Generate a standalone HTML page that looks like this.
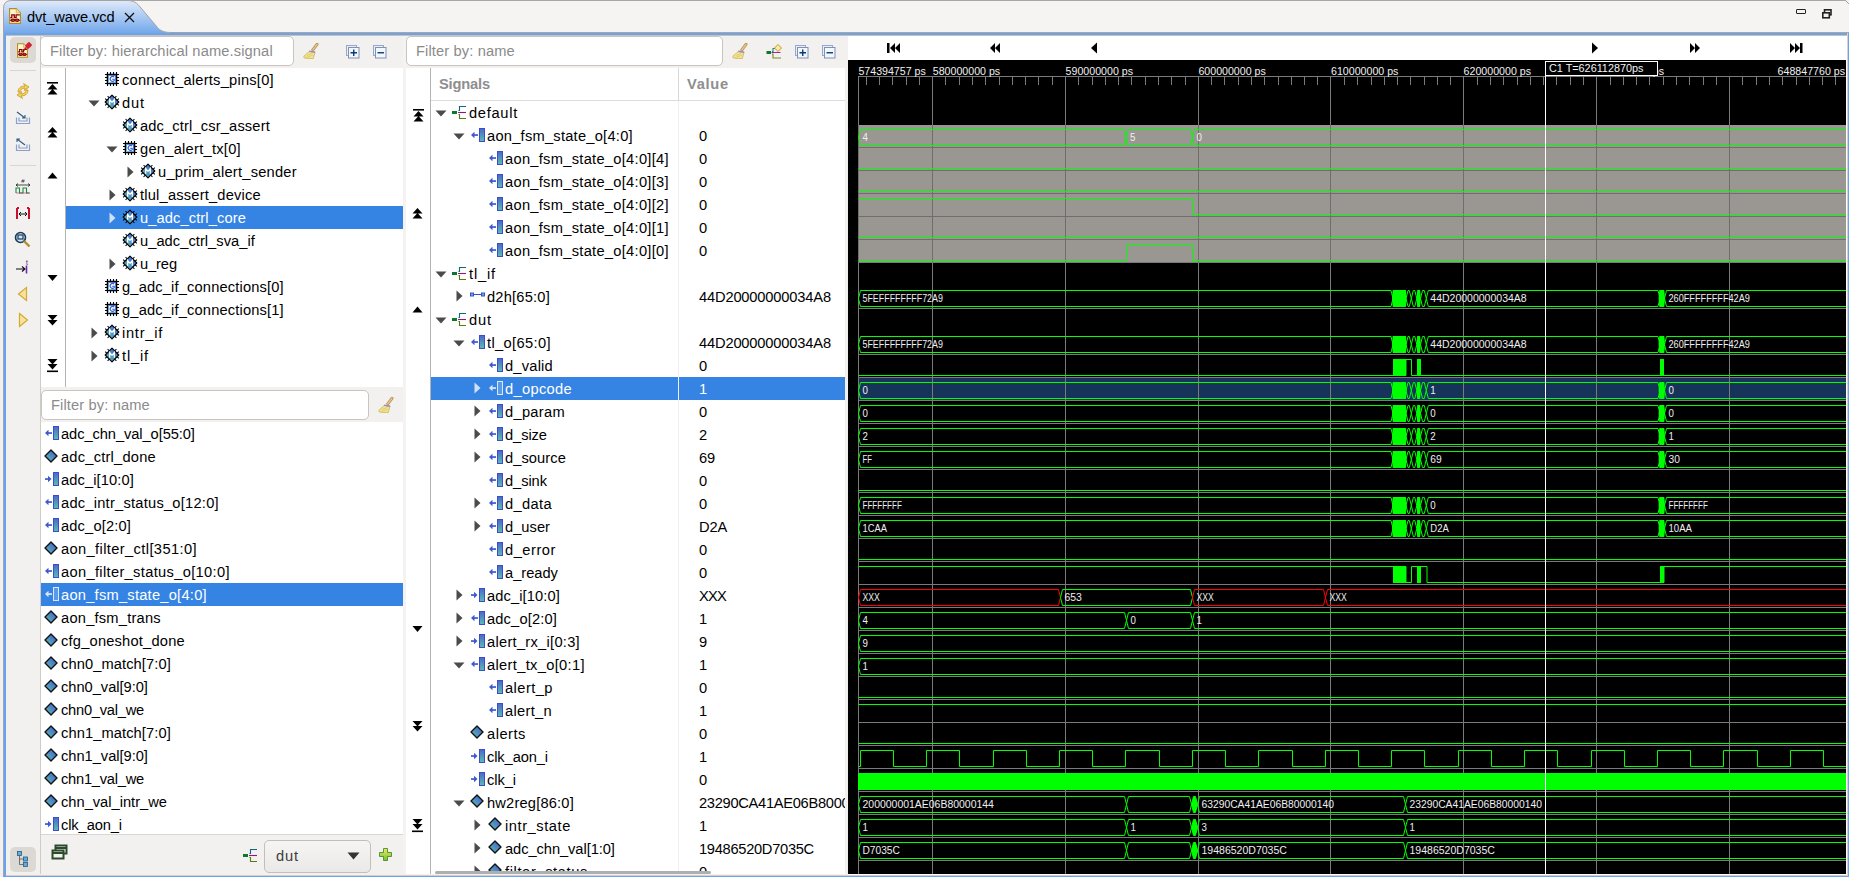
<!DOCTYPE html><html><head><meta charset="utf-8"><style>
*{box-sizing:border-box}
body{margin:0;width:1849px;height:877px;overflow:hidden;background:#f2f1f0;position:relative;font-family:"Liberation Sans",sans-serif;}
.a{position:absolute}
.t{position:absolute;white-space:pre;font-size:14.67px;height:23px}
svg{position:absolute;overflow:visible}
</style></head><body>
<svg width="0" height="0" style="position:absolute">
<defs>
<linearGradient id="tabg" x1="0" y1="0" x2="0" y2="1"><stop offset="0" stop-color="#dfeafa"/><stop offset="1" stop-color="#6aa2ea"/></linearGradient>
<linearGradient id="barg" x1="0" y1="0" x2="0" y2="1"><stop offset="0" stop-color="#4a68c8"/><stop offset="1" stop-color="#5cbcb4"/></linearGradient>
<linearGradient id="diag" x1="1" y1="0" x2="0" y2="1"><stop offset="0.1" stop-color="#4060d0"/><stop offset="0.9" stop-color="#5cbab2"/></linearGradient>
<linearGradient id="gbord" x1="1" y1="0" x2="0" y2="1"><stop offset="0" stop-color="#3a62d8"/><stop offset="1" stop-color="#6ad0e0"/></linearGradient>
<symbol id="tdown" viewBox="0 0 12 12"><path d="M0.5 3.5h11l-5.5 6z" fill="#4b4b4b"/></symbol>
<symbol id="tright" viewBox="0 0 12 12"><path d="M3.5 0.5v11l6-5.5z" fill="#4b4b4b"/></symbol>
<symbol id="trightw" viewBox="0 0 12 12"><path d="M3.5 0.5v11l6-5.5z" fill="#cfe0f7"/></symbol>
<symbol id="icG" viewBox="0 0 16 16"><path d="M3.5 1v14M6.5 1v14M9.5 1v14M12.5 1v14M1 3.5h14M1 6.5h14M1 9.5h14M1 12.5h14" stroke="#000" stroke-width="1.1"/><rect x="2.75" y="2.75" width="10.5" height="10.5" fill="#000"/><rect x="4.45" y="4.45" width="7.1" height="7.1" fill="#fff" stroke="url(#gbord)" stroke-width="0.9"/><path d="M10.2 6.2A2.3 2.5 0 1 0 10.2 9.6V8.2H8.2" stroke="#3a58cc" stroke-width="1.1" fill="none"/></symbol>
<symbol id="icM" viewBox="0 0 16 16"><path d="M3 6.4L1.2 4.6M5.4 4L3.6 2.2M10.6 4L12.4 2.2M13 6.4L14.8 4.6M13 9.6L14.8 11.4M10.6 12L12.4 13.8M5.4 12L3.6 13.8M3 9.6L1.2 11.4" stroke="#000" stroke-width="1.05"/><path d="M8 1.2l6.8 6.8l-6.8 6.8l-6.8-6.8z" fill="url(#diag)" stroke="#000" stroke-width="1.15" stroke-linejoin="round"/><path d="M5.7 10.8V5.5L8 8.3L10.3 5.5V10.8" stroke="#fff" stroke-width="1.3" fill="none"/></symbol>
<symbol id="icOut" viewBox="0 0 18 18"><path d="M2 9L5.5 5.8V12.2z" fill="#3d5acc"/><rect x="5" y="8.2" width="4" height="1.7" fill="#3d5acc"/><rect x="10.5" y="2.5" width="5" height="13" fill="url(#barg)" stroke="#3b4ccc" stroke-width="1"/></symbol>
<symbol id="icOutW" viewBox="0 0 18 18"><path d="M2 9L5.5 5.8V12.2z" fill="#dbe8fb"/><rect x="5" y="8.2" width="4" height="1.7" fill="#dbe8fb"/><rect x="10.5" y="2.5" width="5" height="13" fill="#5c9ae8" stroke="#dbe8fb" stroke-width="1"/></symbol>
<symbol id="icIn" viewBox="0 0 18 18"><path d="M8.5 9L5 5.8V12.2z" fill="#3d5acc"/><rect x="2" y="8.2" width="4" height="1.7" fill="#3d5acc"/><rect x="10.5" y="2.5" width="5" height="13" fill="url(#barg)" stroke="#3b4ccc" stroke-width="1"/></symbol>
<symbol id="icVar" viewBox="0 0 14 14"><path d="M7 1l6 6l-6 6l-6-6z" fill="url(#diag)" stroke="#111" stroke-width="1.4" stroke-linejoin="round"/></symbol>
<symbol id="icGrp" viewBox="0 0 18 18"><rect x="1" y="8" width="5" height="3" fill="#0a7a2a"/><path d="M15 3.5H8.5V7.5H7.5" stroke="#0a6a7a" stroke-width="1.1" fill="none"/><path d="M7 9.5H15" stroke="#8a1a80" stroke-width="1.1"/><path d="M7.5 11.5H8.5V15.5H15" stroke="#5a7a10" stroke-width="1.1" fill="none"/></symbol>
<symbol id="icStruct" viewBox="0 0 18 18"><rect x="1.5" y="6" width="3" height="3" fill="#5cb8c0" stroke="#3a4ccc" stroke-width="1"/><rect x="12.5" y="6" width="3" height="3" fill="#5cb8c0" stroke="#3a4ccc" stroke-width="1"/><path d="M4.5 7.5h8" stroke="#3a4ccc" stroke-width="1"/></symbol>
<symbol id="icBroom" viewBox="0 0 16 16"><path d="M14 1.3L9.8 6.8" stroke="#b89050" stroke-width="3" stroke-linecap="round"/><path d="M14 1.3L9.8 6.8" stroke="#e8c890" stroke-width="1.4" stroke-linecap="round"/><path d="M6.5 8.3L12 9.3L10.3 15.6Q5 16 1 14.8L0.8 13.2z" fill="#f0e38e" stroke="#cdb55a" stroke-width="0.8"/><path d="M6.2 8.2L12.2 9.2" stroke="#9c8ad0" stroke-width="1.6"/><path d="M4 12.5L9 10.5M3.5 14.5L10 12" stroke="#d8c060" stroke-width="0.6"/></symbol>
<symbol id="icPlusBox" viewBox="0 0 14 14"><rect x="0.5" y="0.5" width="10" height="10" fill="#e6eef8" stroke="#9aa8c8"/><rect x="2.5" y="2.5" width="10.5" height="10.5" fill="#f2f7fd" stroke="#8090b8"/><path d="M4.5 7.75h6.5M7.75 4.5v6.5" stroke="#0a3a78" stroke-width="1.4"/></symbol>
<symbol id="icMinusBox" viewBox="0 0 14 14"><rect x="0.5" y="0.5" width="10" height="10" fill="#e6eef8" stroke="#9aa8c8"/><rect x="2.5" y="2.5" width="10.5" height="10.5" fill="#f2f7fd" stroke="#8090b8"/><path d="M4.5 7.75h6.5" stroke="#0a3a78" stroke-width="1.4"/></symbol>
<symbol id="icTop" viewBox="0 0 12 14"><rect x="0" y="0" width="11" height="1.6" fill="#000"/><path d="M5.5 2l5 5.5h-10z M5.5 7l5 5.5h-10z" fill="#000"/></symbol>
<symbol id="icUp2" viewBox="0 0 12 14"><path d="M5.5 0l5 5.5h-10z M5.5 5l5 5.5h-10z" fill="#000"/></symbol>
<symbol id="icUp" viewBox="0 0 12 8"><path d="M5.5 0.5l5 6h-10z" fill="#000"/></symbol>
<symbol id="icDown" viewBox="0 0 12 8"><path d="M5.5 7l5-6h-10z" fill="#000"/></symbol>
<symbol id="icDown2" viewBox="0 0 12 14"><path d="M5.5 5.5l5-5.5h-10z M5.5 10.5l5-5.5h-10z" fill="#000"/></symbol>
<symbol id="icBot" viewBox="0 0 12 14"><path d="M5.5 5.5l5-5.5h-10z M5.5 10.5l5-5.5h-10z" fill="#000"/><rect x="0" y="11.5" width="11" height="1.6" fill="#000"/></symbol>
<symbol id="icVcd" viewBox="0 0 12 16"><path d="M0.6 0.6H7.2L11.4 4.8V15.4H0.6z" fill="#fff4cc" stroke="#b48a1c" stroke-width="1.1"/><path d="M7.2 0.6V4.8H11.4" fill="#f0d890" stroke="#c8a040" stroke-width="0.6"/><path d="M1.2 9.6H2.8V6.9H5.3V9.6H7.1V6.9H10.8" stroke="#8b0000" stroke-width="1.3" fill="none"/><path d="M1 12.3H11" stroke="#8b0000" stroke-width="0.9"/><ellipse cx="3.9" cy="12.3" rx="1.9" ry="1.2" fill="none" stroke="#8b0000" stroke-width="1.1"/><ellipse cx="8.1" cy="12.3" rx="1.9" ry="1.2" fill="none" stroke="#8b0000" stroke-width="1.1"/></symbol>
</defs></svg>
<div class="a" style="left:0;top:0;width:1849px;height:33px;background:#f5f4f2"></div>
<div class="a" style="left:120px;top:0;width:1725px;height:1px;background:#a9a7a4"></div>
<svg style="left:0;top:0" width="200" height="36"><path d="M3.5 36V8.5Q3.5 0.5 11.5 0.5H127C134 0.5 137 3 141 8L157.5 27.5C160 30.5 164 32.5 171 32.5H200V36z" fill="url(#tabg)"/><path d="M3.5 36V8.5Q3.5 0.5 11.5 0.5H127C134 0.5 137 3 141 8L157.5 27.5C160 30.5 164 32.5 171 32.5H200" fill="none" stroke="#a3a3a3" stroke-width="1"/></svg>
<div class="a" style="left:1845px;top:0;width:4px;height:4px;background:linear-gradient(45deg,#f2f1f0 50%,#a9a7a4 50%,#a9a7a4 60%,#f2f1f0 60%)"></div>
<svg style="left:9px;top:8px" width="12" height="16"><use href="#icVcd"/></svg>
<div class="t" style="left:27px;top:6px;line-height:23px;color:#000;letter-spacing:-0.115px;">dvt_wave.vcd</div>
<svg style="left:124px;top:12px" width="11" height="11"><path d="M1 1l9 9M10 1l-9 9" stroke="#111" stroke-width="1.3"/></svg>
<div class="a" style="left:1796px;top:9px;width:10px;height:5px;border:1.5px solid #222;border-radius:1px"></div>
<svg style="left:1822px;top:9px" width="11" height="10"><rect x="2.5" y="0.8" width="6.5" height="5" fill="none" stroke="#222" stroke-width="1.6"/><rect x="0.8" y="3.8" width="6.5" height="5" fill="#f2f1f0" stroke="#222" stroke-width="1.6"/></svg>
<div class="a" style="left:200px;top:32px;width:1649px;height:1px;background:#a9a7a4"></div>
<div class="a" style="left:3px;top:33px;width:1846px;height:2px;background:#6ca4ec"></div>
<div class="a" style="left:3px;top:35px;width:1846px;height:1px;background:#c9c0b8"></div>
<div class="a" style="left:3px;top:33px;width:1px;height:844px;background:#9aa8b8"></div>
<div class="a" style="left:4px;top:33px;width:2px;height:844px;background:#6ca4ec"></div>
<div class="a" style="left:1847px;top:33px;width:1px;height:844px;background:#d8d2cc"></div><div class="a" style="left:1848px;top:33px;width:1px;height:844px;background:#6ca4ec"></div>
<div class="a" style="left:3px;top:876px;width:1846px;height:1px;background:#6ca4ec"></div>
<div class="a" style="left:6px;top:875px;width:1841px;height:1px;background:#d8d0c8"></div>
<div class="a" style="left:6px;top:36px;width:34px;height:838px;background:#f2f1f0"></div>
<div class="a" style="left:10px;top:37px;width:26px;height:26px;background:#dcd9d5;border-radius:5px"></div>
<svg style="left:15px;top:41px" width="18" height="18"><use href="#icVcd" x="2" y="2" width="11" height="15"/><path d="M8.5 9.5L11.5 6.5" stroke="#b01020" stroke-width="1.6"/><path d="M10.5 4.2L13.8 7.5M12 2.5L15.5 6M11.5 4.5L14 2L16 4L13.5 6.5z" stroke="#d42030" stroke-width="1.8" fill="#e83040"/></svg>
<div class="a" style="left:10px;top:70px;width:26px;height:1px;background:#d9d6d2"></div>
<div class="a" style="left:10px;top:165px;width:26px;height:1px;background:#d9d6d2"></div>
<svg style="left:15px;top:83px" width="16" height="16"><path d="M3 9c0-4 3-6 7-6l-1.5-2.5L14 4l-4.5 3.5L10 5c-3 0-5 2-5 4z" fill="#f3cf5a" stroke="#c89a20" stroke-width="0.8"/><path d="M13 7c0 4-3 6-7 6l1.5 2.5L2 12l4.5-3.5L6 11c3 0 5-2 5-4z" fill="#f3cf5a" stroke="#c89a20" stroke-width="0.8"/></svg>
<svg style="left:15px;top:111px" width="16" height="14"><path d="M1.5 6.5v6h13v-6M4 6.5v3.5h8v-3.5" fill="none" stroke="#8aa0c8" stroke-width="1.2"/><path d="M2 1l8 6M7 7h3v-3" stroke="#2a5a8a" stroke-width="1.1" fill="none"/></svg>
<svg style="left:15px;top:138px" width="16" height="14"><path d="M1.5 6.5v6h13v-6M4 6.5v3.5h8v-3.5" fill="none" stroke="#8aa0c8" stroke-width="1.2"/><path d="M10 7L2 1M2 4V1h3" stroke="#2a5a8a" stroke-width="1.1" fill="none"/></svg>
<svg style="left:15px;top:177px" width="16" height="17"><text x="8" y="6" font-size="6" text-anchor="middle" font-family="Liberation Sans" fill="#222">#</text><path d="M1 8h14M1 8l2-1.5M1 8l2 1.5M15 8l-2-1.5M15 8l-2 1.5" stroke="#222" stroke-width="0.8"/><path d="M1 16v-5h3.5v5h3.5v-5h3.5v5h3" stroke="#1a8a3a" stroke-width="1.1" fill="none"/><path d="M1 16h14" stroke="#b03070" stroke-width="0.6"/></svg>
<svg style="left:15px;top:206px" width="16" height="15"><path d="M2 2v11M14 2v11" stroke="#c8102e" stroke-width="2"/><path d="M2 2h2M14 2h-2" stroke="#c8102e" stroke-width="2"/><path d="M4 8h8M4 8l2-2M4 8l2 2M12 8l-2-2M12 8l-2 2" stroke="#111" stroke-width="1"/></svg>
<svg style="left:14px;top:231px" width="17" height="17"><circle cx="6.5" cy="6.5" r="5" fill="#cfe4f4" stroke="#1a3a5a" stroke-width="1.6"/><rect x="4" y="4" width="5" height="4" fill="none" stroke="#1a3a5a" stroke-width="1.2"/><path d="M10 10l5.5 5.5" stroke="#b0902a" stroke-width="2.4"/></svg>
<svg style="left:15px;top:259px" width="16" height="16"><text x="11" y="6" font-size="6.5" font-family="Liberation Sans" fill="#222">t</text><path d="M1 10h9M7 7.5l3 2.5l-3 2.5" stroke="#111" stroke-width="1.1" fill="none"/><path d="M11.5 6.5v8" stroke="#6a2ab8" stroke-width="1.6"/></svg>
<svg style="left:16px;top:286px" width="14" height="16"><path d="M10.5 1.5v13l-8-6.5z" fill="#f7e3a0" stroke="#d8a830" stroke-width="1.2"/></svg>
<svg style="left:16px;top:312px" width="14" height="16"><path d="M3.5 1.5v13l8-6.5z" fill="#f7e3a0" stroke="#d8a830" stroke-width="1.2"/></svg>
<div class="a" style="left:10px;top:847px;width:26px;height:25px;background:#dcd9d5;border-radius:5px"></div>
<svg style="left:17px;top:851px" width="12" height="16"><rect x="0.5" y="0.5" width="4" height="4" fill="#5ab0d8" stroke="#2a5a8a" stroke-width="0.8"/><rect x="6.5" y="6" width="4" height="4" fill="#5ab0d8" stroke="#2a5a8a" stroke-width="0.8"/><rect x="6.5" y="11.5" width="4" height="4" fill="#5ab0d8" stroke="#2a5a8a" stroke-width="0.8"/><path d="M2.5 4.5v9h4M2.5 8h4" stroke="#555" stroke-width="0.8" fill="none"/></svg>
<div class="a" style="left:40px;top:36px;width:1px;height:838px;background:#cfcbc6"></div>
<div class="a" style="left:40px;top:36px;width:254px;height:30px;background:#fff;border:1px solid #c9c4bf;border-radius:5px"></div><div class="t" style="left:50px;top:40px;line-height:23px;color:#8b8b8b;letter-spacing:0.128px;">Filter by: hierarchical name.signal</div>
<svg style="left:303px;top:43px" width="16" height="16"><use href="#icBroom" width="16" height="16"/></svg>
<svg style="left:346px;top:45px" width="14" height="14"><use href="#icPlusBox" width="14" height="14"/></svg>
<svg style="left:373px;top:45px" width="14" height="14"><use href="#icMinusBox" width="14" height="14"/></svg>
<div class="a" style="left:41px;top:68px;width:362px;height:319px;background:#fff"></div>
<div class="a" style="left:65px;top:68px;width:1px;height:319px;background:#b4b4b4"></div>
<svg style="left:47px;top:82px" width="12" height="14"><use href="#icTop" width="12" height="14"/></svg>
<svg style="left:47px;top:127px" width="12" height="14"><use href="#icUp2" width="12" height="14"/></svg>
<svg style="left:47px;top:172px" width="12" height="8"><use href="#icUp" width="12" height="8"/></svg>
<svg style="left:47px;top:274px" width="12" height="8"><use href="#icDown" width="12" height="8"/></svg>
<svg style="left:47px;top:315px" width="12" height="14"><use href="#icDown2" width="12" height="14"/></svg>
<svg style="left:47px;top:359px" width="12" height="14"><use href="#icBot" width="12" height="14"/></svg>
<svg style="left:104px;top:71px" width="16" height="16"><use href="#icG" width="16" height="16"/></svg>
<div class="t" style="left:122px;top:69px;line-height:23px;color:#000;letter-spacing:0.237px;">connect_alerts_pins[0]</div>
<svg style="left:88px;top:97px" width="12" height="12"><use href="#tdown" width="12" height="12"/></svg>
<svg style="left:104px;top:94px" width="16" height="16"><use href="#icM" width="16" height="16"/></svg>
<div class="t" style="left:122px;top:92px;line-height:23px;color:#000;letter-spacing:0.869px;">dut</div>
<svg style="left:122px;top:117px" width="16" height="16"><use href="#icM" width="16" height="16"/></svg>
<div class="t" style="left:140px;top:115px;line-height:23px;color:#000;letter-spacing:0.148px;">adc_ctrl_csr_assert</div>
<svg style="left:106px;top:143px" width="12" height="12"><use href="#tdown" width="12" height="12"/></svg>
<svg style="left:122px;top:140px" width="16" height="16"><use href="#icG" width="16" height="16"/></svg>
<div class="t" style="left:140px;top:138px;line-height:23px;color:#000;letter-spacing:0.263px;">gen_alert_tx[0]</div>
<svg style="left:124px;top:166px" width="12" height="12"><use href="#tright" width="12" height="12"/></svg>
<svg style="left:140px;top:163px" width="16" height="16"><use href="#icM" width="16" height="16"/></svg>
<div class="t" style="left:158px;top:161px;line-height:23px;color:#000;letter-spacing:0.234px;">u_prim_alert_sender</div>
<svg style="left:106px;top:189px" width="12" height="12"><use href="#tright" width="12" height="12"/></svg>
<svg style="left:122px;top:186px" width="16" height="16"><use href="#icM" width="16" height="16"/></svg>
<div class="t" style="left:140px;top:184px;line-height:23px;color:#000;letter-spacing:0.199px;">tlul_assert_device</div>
<div class="a" style="left:66px;top:206px;width:337px;height:23px;background:#3584e4"></div>
<svg style="left:106px;top:212px" width="12" height="12"><use href="#trightw" width="12" height="12"/></svg>
<svg style="left:122px;top:209px" width="16" height="16"><use href="#icM" width="16" height="16"/></svg>
<div class="t" style="left:140px;top:207px;line-height:23px;color:#fff;letter-spacing:0.108px;">u_adc_ctrl_core</div>
<svg style="left:122px;top:232px" width="16" height="16"><use href="#icM" width="16" height="16"/></svg>
<div class="t" style="left:140px;top:230px;line-height:23px;color:#000;letter-spacing:0.049px;">u_adc_ctrl_sva_if</div>
<svg style="left:106px;top:258px" width="12" height="12"><use href="#tright" width="12" height="12"/></svg>
<svg style="left:122px;top:255px" width="16" height="16"><use href="#icM" width="16" height="16"/></svg>
<div class="t" style="left:140px;top:253px;line-height:23px;color:#000;letter-spacing:-0.104px;">u_reg</div>
<svg style="left:104px;top:278px" width="16" height="16"><use href="#icG" width="16" height="16"/></svg>
<div class="t" style="left:122px;top:276px;line-height:23px;color:#000;letter-spacing:0.164px;">g_adc_if_connections[0]</div>
<svg style="left:104px;top:301px" width="16" height="16"><use href="#icG" width="16" height="16"/></svg>
<div class="t" style="left:122px;top:299px;line-height:23px;color:#000;letter-spacing:0.164px;">g_adc_if_connections[1]</div>
<svg style="left:88px;top:327px" width="12" height="12"><use href="#tright" width="12" height="12"/></svg>
<svg style="left:104px;top:324px" width="16" height="16"><use href="#icM" width="16" height="16"/></svg>
<div class="t" style="left:122px;top:322px;line-height:23px;color:#000;letter-spacing:0.732px;">intr_if</div>
<svg style="left:88px;top:350px" width="12" height="12"><use href="#tright" width="12" height="12"/></svg>
<svg style="left:104px;top:347px" width="16" height="16"><use href="#icM" width="16" height="16"/></svg>
<div class="t" style="left:122px;top:345px;line-height:23px;color:#000;letter-spacing:0.834px;">tl_if</div>
<div class="a" style="left:41px;top:390px;width:328px;height:30px;background:#fff;border:1px solid #c9c4bf;border-radius:5px"></div><div class="t" style="left:51px;top:394px;line-height:23px;color:#8b8b8b;letter-spacing:0.132px;">Filter by: name</div>
<svg style="left:378px;top:397px" width="16" height="16"><use href="#icBroom" width="16" height="16"/></svg>
<div class="a" style="left:41px;top:422px;width:362px;height:412px;background:#fff"></div>
<div class="a" style="left:41px;top:834px;width:362px;height:1px;background:#dad7d3"></div>
<svg style="left:43px;top:424px" width="18" height="18"><use href="#icOut" width="18" height="18"/></svg>
<div class="t" style="left:61px;top:423px;line-height:23px;color:#000;letter-spacing:-0.074px;">adc_chn_val_o[55:0]</div>
<svg style="left:44px;top:449px" width="14" height="14"><use href="#icVar" width="14" height="14"/></svg>
<div class="t" style="left:61px;top:446px;line-height:23px;color:#000;letter-spacing:0.218px;">adc_ctrl_done</div>
<svg style="left:43px;top:470px" width="18" height="18"><use href="#icIn" width="18" height="18"/></svg>
<div class="t" style="left:61px;top:469px;line-height:23px;color:#000;letter-spacing:0.111px;">adc_i[10:0]</div>
<svg style="left:43px;top:493px" width="18" height="18"><use href="#icOut" width="18" height="18"/></svg>
<div class="t" style="left:61px;top:492px;line-height:23px;color:#000;letter-spacing:0.239px;">adc_intr_status_o[12:0]</div>
<svg style="left:43px;top:516px" width="18" height="18"><use href="#icOut" width="18" height="18"/></svg>
<div class="t" style="left:61px;top:515px;line-height:23px;color:#000;letter-spacing:0.149px;">adc_o[2:0]</div>
<svg style="left:44px;top:541px" width="14" height="14"><use href="#icVar" width="14" height="14"/></svg>
<div class="t" style="left:61px;top:538px;line-height:23px;color:#000;letter-spacing:0.379px;">aon_filter_ctl[351:0]</div>
<svg style="left:43px;top:562px" width="18" height="18"><use href="#icOut" width="18" height="18"/></svg>
<div class="t" style="left:61px;top:561px;line-height:23px;color:#000;letter-spacing:0.333px;">aon_filter_status_o[10:0]</div>
<div class="a" style="left:41px;top:583px;width:362px;height:23px;background:#3584e4"></div>
<svg style="left:43px;top:585px" width="18" height="18"><use href="#icOutW" width="18" height="18"/></svg>
<div class="t" style="left:61px;top:584px;line-height:23px;color:#fff;letter-spacing:0.245px;">aon_fsm_state_o[4:0]</div>
<svg style="left:44px;top:610px" width="14" height="14"><use href="#icVar" width="14" height="14"/></svg>
<div class="t" style="left:61px;top:607px;line-height:23px;color:#000;letter-spacing:0.228px;">aon_fsm_trans</div>
<svg style="left:44px;top:633px" width="14" height="14"><use href="#icVar" width="14" height="14"/></svg>
<div class="t" style="left:61px;top:630px;line-height:23px;color:#000;letter-spacing:0.205px;">cfg_oneshot_done</div>
<svg style="left:44px;top:656px" width="14" height="14"><use href="#icVar" width="14" height="14"/></svg>
<div class="t" style="left:61px;top:653px;line-height:23px;color:#000;letter-spacing:0.102px;">chn0_match[7:0]</div>
<svg style="left:44px;top:679px" width="14" height="14"><use href="#icVar" width="14" height="14"/></svg>
<div class="t" style="left:61px;top:676px;line-height:23px;color:#000;letter-spacing:-0.021px;">chn0_val[9:0]</div>
<svg style="left:44px;top:702px" width="14" height="14"><use href="#icVar" width="14" height="14"/></svg>
<div class="t" style="left:61px;top:699px;line-height:23px;color:#000;letter-spacing:-0.240px;">chn0_val_we</div>
<svg style="left:44px;top:725px" width="14" height="14"><use href="#icVar" width="14" height="14"/></svg>
<div class="t" style="left:61px;top:722px;line-height:23px;color:#000;letter-spacing:0.102px;">chn1_match[7:0]</div>
<svg style="left:44px;top:748px" width="14" height="14"><use href="#icVar" width="14" height="14"/></svg>
<div class="t" style="left:61px;top:745px;line-height:23px;color:#000;letter-spacing:-0.021px;">chn1_val[9:0]</div>
<svg style="left:44px;top:771px" width="14" height="14"><use href="#icVar" width="14" height="14"/></svg>
<div class="t" style="left:61px;top:768px;line-height:23px;color:#000;letter-spacing:-0.240px;">chn1_val_we</div>
<svg style="left:44px;top:794px" width="14" height="14"><use href="#icVar" width="14" height="14"/></svg>
<div class="t" style="left:61px;top:791px;line-height:23px;color:#000;letter-spacing:-0.001px;">chn_val_intr_we</div>
<svg style="left:43px;top:815px" width="18" height="18"><use href="#icIn" width="18" height="18"/></svg>
<div class="t" style="left:61px;top:814px;line-height:23px;color:#000;letter-spacing:-0.109px;">clk_aon_i</div>
<svg style="left:51px;top:844px" width="17" height="17"><rect x="4.5" y="1.5" width="11" height="8" fill="none" stroke="#2a4a2a" stroke-width="2"/><rect x="1.5" y="6.5" width="11" height="8" fill="#f2f1f0" stroke="#2a4a2a" stroke-width="2"/><path d="M1.5 9h11M4.5 4h11" stroke="#2a4a2a" stroke-width="2"/></svg>
<svg style="left:242px;top:846px" width="18" height="18"><use href="#icGrp" width="18" height="18"/></svg>
<div class="a" style="left:264px;top:840px;width:107px;height:33px;background:linear-gradient(#f6f5f4,#ebe9e7);border:1px solid #c3beb8;border-radius:5px"></div>
<div class="t" style="left:276px;top:845px;line-height:23px;color:#3c3c3c;letter-spacing:0.869px;">dut</div>
<svg style="left:347px;top:852px" width="13" height="8"><path d="M0.5 0.5h12l-6 7z" fill="#333"/></svg>
<svg style="left:379px;top:847px" width="15" height="15"><defs><linearGradient id="plg" x1="0" y1="0" x2="0" y2="1"><stop offset="0" stop-color="#e8ec60"/><stop offset="1" stop-color="#78c030"/></linearGradient></defs><path d="M4.5 1.5h4v4h4v4h-4v4h-4v-4h-4v-4h4z" fill="url(#plg)" stroke="#4a8a2a" stroke-width="0.9"/></svg>
<div class="a" style="left:403px;top:36px;width:3px;height:838px;background:#f4f3f1"></div>
<div class="a" style="left:406px;top:36px;width:317px;height:30px;background:#fff;border:1px solid #c9c4bf;border-radius:5px"></div><div class="t" style="left:416px;top:40px;line-height:23px;color:#8b8b8b;letter-spacing:0.132px;">Filter by: name</div>
<svg style="left:732px;top:43px" width="16" height="16"><use href="#icBroom" width="16" height="16"/></svg>
<svg style="left:766px;top:44px" width="17" height="16"><rect x="0.5" y="7" width="4.5" height="3" fill="#0a7a2a"/><path d="M5.5 8.5h9" stroke="#9a2a9a" stroke-width="1"/><path d="M9 4.5h-2v3h-1" stroke="#1a8a8a" stroke-width="1.1" fill="none"/><path d="M6 10h1v4h8" stroke="#7a8a1a" stroke-width="1.1" fill="none"/><path d="M12 0.5l3.5 3.5l-3.5 3.5l-3.5-3.5z" fill="#fbe9a8" stroke="#c9952a" stroke-width="1"/></svg>
<svg style="left:795px;top:45px" width="14" height="14"><use href="#icPlusBox" width="14" height="14"/></svg>
<svg style="left:822px;top:45px" width="14" height="14"><use href="#icMinusBox" width="14" height="14"/></svg>
<div class="a" style="left:406px;top:68px;width:439px;height:806px;background:#fff"></div>
<div class="a" style="left:430px;top:68px;width:1px;height:806px;background:#b4b4b4"></div>
<svg style="left:413px;top:109px" width="12" height="14"><use href="#icTop" width="12" height="14"/></svg>
<svg style="left:412px;top:208px" width="12" height="14"><use href="#icUp2" width="12" height="14"/></svg>
<svg style="left:412px;top:306px" width="12" height="8"><use href="#icUp" width="12" height="8"/></svg>
<svg style="left:412px;top:625px" width="12" height="8"><use href="#icDown" width="12" height="8"/></svg>
<svg style="left:412px;top:721px" width="12" height="14"><use href="#icDown2" width="12" height="14"/></svg>
<svg style="left:412px;top:819px" width="12" height="14"><use href="#icBot" width="12" height="14"/></svg>
<div class="t" style="left:439px;top:73px;line-height:23px;color:#8e8e8e;letter-spacing:-0.159px;font-weight:bold;">Signals</div>
<div class="t" style="left:687px;top:73px;line-height:23px;color:#8e8e8e;letter-spacing:0.696px;font-weight:bold;">Value</div>
<div class="a" style="left:678px;top:68px;width:1px;height:32px;background:#d8d8d8"></div>
<div class="a" style="left:431px;top:100px;width:414px;height:1px;background:#dcdcdc"></div>
<div class="a" style="left:678px;top:101px;width:1px;height:773px;background:#f0f0f0"></div>
<div class="a" style="left:431px;top:101px;width:414px;height:773px;overflow:hidden">
<svg style="left:4px;top:6px" width="12" height="12"><use href="#tdown" width="12" height="12"/></svg>
<svg style="left:20px;top:2px" width="18" height="18"><use href="#icGrp" width="18" height="18"/></svg>
<div class="t" style="left:38px;top:1px;line-height:23px;color:#000;letter-spacing:0.708px;">default</div>
<svg style="left:22px;top:29px" width="12" height="12"><use href="#tdown" width="12" height="12"/></svg>
<svg style="left:38px;top:25px" width="18" height="18"><use href="#icOut" width="18" height="18"/></svg>
<div class="t" style="left:56px;top:24px;line-height:23px;color:#000;letter-spacing:0.245px;">aon_fsm_state_o[4:0]</div>
<div class="t" style="left:268px;top:24px;line-height:23px;color:#000;letter-spacing:-0.159px;">0</div>
<svg style="left:56px;top:48px" width="18" height="18"><use href="#icOut" width="18" height="18"/></svg>
<div class="t" style="left:74px;top:47px;line-height:23px;color:#000;letter-spacing:0.287px;">aon_fsm_state_o[4:0][4]</div>
<div class="t" style="left:268px;top:47px;line-height:23px;color:#000;letter-spacing:-0.159px;">0</div>
<svg style="left:56px;top:71px" width="18" height="18"><use href="#icOut" width="18" height="18"/></svg>
<div class="t" style="left:74px;top:70px;line-height:23px;color:#000;letter-spacing:0.287px;">aon_fsm_state_o[4:0][3]</div>
<div class="t" style="left:268px;top:70px;line-height:23px;color:#000;letter-spacing:-0.159px;">0</div>
<svg style="left:56px;top:94px" width="18" height="18"><use href="#icOut" width="18" height="18"/></svg>
<div class="t" style="left:74px;top:93px;line-height:23px;color:#000;letter-spacing:0.287px;">aon_fsm_state_o[4:0][2]</div>
<div class="t" style="left:268px;top:93px;line-height:23px;color:#000;letter-spacing:-0.159px;">0</div>
<svg style="left:56px;top:117px" width="18" height="18"><use href="#icOut" width="18" height="18"/></svg>
<div class="t" style="left:74px;top:116px;line-height:23px;color:#000;letter-spacing:0.287px;">aon_fsm_state_o[4:0][1]</div>
<div class="t" style="left:268px;top:116px;line-height:23px;color:#000;letter-spacing:-0.159px;">0</div>
<svg style="left:56px;top:140px" width="18" height="18"><use href="#icOut" width="18" height="18"/></svg>
<div class="t" style="left:74px;top:139px;line-height:23px;color:#000;letter-spacing:0.287px;">aon_fsm_state_o[4:0][0]</div>
<div class="t" style="left:268px;top:139px;line-height:23px;color:#000;letter-spacing:-0.159px;">0</div>
<svg style="left:4px;top:167px" width="12" height="12"><use href="#tdown" width="12" height="12"/></svg>
<svg style="left:20px;top:163px" width="18" height="18"><use href="#icGrp" width="18" height="18"/></svg>
<div class="t" style="left:38px;top:162px;line-height:23px;color:#000;letter-spacing:0.834px;">tl_if</div>
<svg style="left:22px;top:189px" width="12" height="12"><use href="#tright" width="12" height="12"/></svg>
<svg style="left:38px;top:186px" width="18" height="18"><use href="#icStruct" width="18" height="18"/></svg>
<div class="t" style="left:56px;top:185px;line-height:23px;color:#000;letter-spacing:0.202px;">d2h[65:0]</div>
<div class="t" style="left:268px;top:185px;line-height:23px;color:#000;letter-spacing:-0.163px;">44D20000000034A8</div>
<svg style="left:4px;top:213px" width="12" height="12"><use href="#tdown" width="12" height="12"/></svg>
<svg style="left:20px;top:209px" width="18" height="18"><use href="#icGrp" width="18" height="18"/></svg>
<div class="t" style="left:38px;top:208px;line-height:23px;color:#000;letter-spacing:0.869px;">dut</div>
<svg style="left:22px;top:236px" width="12" height="12"><use href="#tdown" width="12" height="12"/></svg>
<svg style="left:38px;top:232px" width="18" height="18"><use href="#icOut" width="18" height="18"/></svg>
<div class="t" style="left:56px;top:231px;line-height:23px;color:#000;letter-spacing:0.364px;">tl_o[65:0]</div>
<div class="t" style="left:268px;top:231px;line-height:23px;color:#000;letter-spacing:-0.163px;">44D20000000034A8</div>
<svg style="left:56px;top:255px" width="18" height="18"><use href="#icOut" width="18" height="18"/></svg>
<div class="t" style="left:74px;top:254px;line-height:23px;color:#000;letter-spacing:0.216px;">d_valid</div>
<div class="t" style="left:268px;top:254px;line-height:23px;color:#000;letter-spacing:-0.159px;">0</div>
<div class="a" style="left:0;top:276px;width:247px;height:23px;background:#3584e4"></div>
<div class="a" style="left:248px;top:276px;width:166px;height:23px;background:#3584e4"></div>
<svg style="left:40px;top:281px" width="12" height="12"><use href="#trightw" width="12" height="12"/></svg>
<svg style="left:56px;top:278px" width="18" height="18"><use href="#icOutW" width="18" height="18"/></svg>
<div class="t" style="left:74px;top:277px;line-height:23px;color:#fff;letter-spacing:0.319px;">d_opcode</div>
<div class="t" style="left:268px;top:277px;line-height:23px;color:#fff;letter-spacing:-0.159px;">1</div>
<svg style="left:40px;top:304px" width="12" height="12"><use href="#tright" width="12" height="12"/></svg>
<svg style="left:56px;top:301px" width="18" height="18"><use href="#icOut" width="18" height="18"/></svg>
<div class="t" style="left:74px;top:300px;line-height:23px;color:#000;letter-spacing:0.300px;">d_param</div>
<div class="t" style="left:268px;top:300px;line-height:23px;color:#000;letter-spacing:-0.159px;">0</div>
<svg style="left:40px;top:327px" width="12" height="12"><use href="#tright" width="12" height="12"/></svg>
<svg style="left:56px;top:324px" width="18" height="18"><use href="#icOut" width="18" height="18"/></svg>
<div class="t" style="left:74px;top:323px;line-height:23px;color:#000;letter-spacing:-0.068px;">d_size</div>
<div class="t" style="left:268px;top:323px;line-height:23px;color:#000;letter-spacing:-0.159px;">2</div>
<svg style="left:40px;top:350px" width="12" height="12"><use href="#tright" width="12" height="12"/></svg>
<svg style="left:56px;top:347px" width="18" height="18"><use href="#icOut" width="18" height="18"/></svg>
<div class="t" style="left:74px;top:346px;line-height:23px;color:#000;letter-spacing:0.081px;">d_source</div>
<div class="t" style="left:268px;top:346px;line-height:23px;color:#000;letter-spacing:-0.159px;">69</div>
<svg style="left:56px;top:370px" width="18" height="18"><use href="#icOut" width="18" height="18"/></svg>
<div class="t" style="left:74px;top:369px;line-height:23px;color:#000;letter-spacing:-0.068px;">d_sink</div>
<div class="t" style="left:268px;top:369px;line-height:23px;color:#000;letter-spacing:-0.159px;">0</div>
<svg style="left:40px;top:396px" width="12" height="12"><use href="#tright" width="12" height="12"/></svg>
<svg style="left:56px;top:393px" width="18" height="18"><use href="#icOut" width="18" height="18"/></svg>
<div class="t" style="left:74px;top:392px;line-height:23px;color:#000;letter-spacing:0.355px;">d_data</div>
<div class="t" style="left:268px;top:392px;line-height:23px;color:#000;letter-spacing:-0.159px;">0</div>
<svg style="left:40px;top:419px" width="12" height="12"><use href="#tright" width="12" height="12"/></svg>
<svg style="left:56px;top:416px" width="18" height="18"><use href="#icOut" width="18" height="18"/></svg>
<div class="t" style="left:74px;top:415px;line-height:23px;color:#000;letter-spacing:0.024px;">d_user</div>
<div class="t" style="left:268px;top:415px;line-height:23px;color:#000;letter-spacing:-0.179px;">D2A</div>
<svg style="left:56px;top:439px" width="18" height="18"><use href="#icOut" width="18" height="18"/></svg>
<div class="t" style="left:74px;top:438px;line-height:23px;color:#000;letter-spacing:0.530px;">d_error</div>
<div class="t" style="left:268px;top:438px;line-height:23px;color:#000;letter-spacing:-0.159px;">0</div>
<svg style="left:56px;top:462px" width="18" height="18"><use href="#icOut" width="18" height="18"/></svg>
<div class="t" style="left:74px;top:461px;line-height:23px;color:#000;letter-spacing:-0.002px;">a_ready</div>
<div class="t" style="left:268px;top:461px;line-height:23px;color:#000;letter-spacing:-0.159px;">0</div>
<svg style="left:22px;top:488px" width="12" height="12"><use href="#tright" width="12" height="12"/></svg>
<svg style="left:38px;top:485px" width="18" height="18"><use href="#icIn" width="18" height="18"/></svg>
<div class="t" style="left:56px;top:484px;line-height:23px;color:#000;letter-spacing:0.111px;">adc_i[10:0]</div>
<div class="t" style="left:268px;top:484px;line-height:23px;color:#000;letter-spacing:-0.785px;">XXX</div>
<svg style="left:22px;top:511px" width="12" height="12"><use href="#tright" width="12" height="12"/></svg>
<svg style="left:38px;top:508px" width="18" height="18"><use href="#icOut" width="18" height="18"/></svg>
<div class="t" style="left:56px;top:507px;line-height:23px;color:#000;letter-spacing:0.149px;">adc_o[2:0]</div>
<div class="t" style="left:268px;top:507px;line-height:23px;color:#000;letter-spacing:-0.159px;">1</div>
<svg style="left:22px;top:534px" width="12" height="12"><use href="#tright" width="12" height="12"/></svg>
<svg style="left:38px;top:531px" width="18" height="18"><use href="#icIn" width="18" height="18"/></svg>
<div class="t" style="left:56px;top:530px;line-height:23px;color:#000;letter-spacing:0.275px;">alert_rx_i[0:3]</div>
<div class="t" style="left:268px;top:530px;line-height:23px;color:#000;letter-spacing:-0.159px;">9</div>
<svg style="left:22px;top:558px" width="12" height="12"><use href="#tdown" width="12" height="12"/></svg>
<svg style="left:38px;top:554px" width="18" height="18"><use href="#icOut" width="18" height="18"/></svg>
<div class="t" style="left:56px;top:553px;line-height:23px;color:#000;letter-spacing:0.335px;">alert_tx_o[0:1]</div>
<div class="t" style="left:268px;top:553px;line-height:23px;color:#000;letter-spacing:-0.159px;">1</div>
<svg style="left:56px;top:577px" width="18" height="18"><use href="#icOut" width="18" height="18"/></svg>
<div class="t" style="left:74px;top:576px;line-height:23px;color:#000;letter-spacing:0.449px;">alert_p</div>
<div class="t" style="left:268px;top:576px;line-height:23px;color:#000;letter-spacing:-0.159px;">0</div>
<svg style="left:56px;top:600px" width="18" height="18"><use href="#icOut" width="18" height="18"/></svg>
<div class="t" style="left:74px;top:599px;line-height:23px;color:#000;letter-spacing:0.306px;">alert_n</div>
<div class="t" style="left:268px;top:599px;line-height:23px;color:#000;letter-spacing:-0.159px;">1</div>
<svg style="left:39px;top:624px" width="14" height="14"><use href="#icVar" width="14" height="14"/></svg>
<div class="t" style="left:56px;top:622px;line-height:23px;color:#000;letter-spacing:0.521px;">alerts</div>
<div class="t" style="left:268px;top:622px;line-height:23px;color:#000;letter-spacing:-0.159px;">0</div>
<svg style="left:38px;top:646px" width="18" height="18"><use href="#icIn" width="18" height="18"/></svg>
<div class="t" style="left:56px;top:645px;line-height:23px;color:#000;letter-spacing:-0.109px;">clk_aon_i</div>
<div class="t" style="left:268px;top:645px;line-height:23px;color:#000;letter-spacing:-0.159px;">1</div>
<svg style="left:38px;top:669px" width="18" height="18"><use href="#icIn" width="18" height="18"/></svg>
<div class="t" style="left:56px;top:668px;line-height:23px;color:#000;letter-spacing:-0.069px;">clk_i</div>
<div class="t" style="left:268px;top:668px;line-height:23px;color:#000;letter-spacing:-0.159px;">0</div>
<svg style="left:22px;top:696px" width="12" height="12"><use href="#tdown" width="12" height="12"/></svg>
<svg style="left:39px;top:693px" width="14" height="14"><use href="#icVar" width="14" height="14"/></svg>
<div class="t" style="left:56px;top:691px;line-height:23px;color:#000;letter-spacing:0.182px;">hw2reg[86:0]</div>
<div class="t" style="left:268px;top:691px;line-height:23px;color:#000;letter-spacing:-0.292px;">23290CA41AE06B80000140</div>
<svg style="left:40px;top:718px" width="12" height="12"><use href="#tright" width="12" height="12"/></svg>
<svg style="left:57px;top:716px" width="14" height="14"><use href="#icVar" width="14" height="14"/></svg>
<div class="t" style="left:74px;top:714px;line-height:23px;color:#000;letter-spacing:0.566px;">intr_state</div>
<div class="t" style="left:268px;top:714px;line-height:23px;color:#000;letter-spacing:-0.159px;">1</div>
<svg style="left:40px;top:741px" width="12" height="12"><use href="#tright" width="12" height="12"/></svg>
<svg style="left:57px;top:739px" width="14" height="14"><use href="#icVar" width="14" height="14"/></svg>
<div class="t" style="left:74px;top:737px;line-height:23px;color:#000;letter-spacing:-0.058px;">adc_chn_val[1:0]</div>
<div class="t" style="left:268px;top:737px;line-height:23px;color:#000;letter-spacing:-0.292px;">19486520D7035C</div>
<svg style="left:40px;top:764px" width="12" height="12"><use href="#tright" width="12" height="12"/></svg>
<svg style="left:57px;top:762px" width="14" height="14"><use href="#icVar" width="14" height="14"/></svg>
<div class="t" style="left:74px;top:760px;line-height:23px;color:#000;letter-spacing:0.614px;">filter_status</div>
<div class="t" style="left:268px;top:760px;line-height:23px;color:#000;letter-spacing:-0.159px;">0</div>
</div>
<div class="a" style="left:435px;top:871px;width:276px;height:3px;background:#adb0b2;border-radius:2px"></div>
<div class="a" style="left:845px;top:36px;width:3px;height:838px;background:#f2f1f0"></div>
<div class="a" style="left:848px;top:36px;width:999px;height:24px;background:#fff"></div>
<div class="a" style="left:1846px;top:60px;width:1px;height:815px;background:#fff"></div>
<div class="a" style="left:848px;top:874px;width:999px;height:1px;background:#fff"></div>
<svg style="left:848px;top:36px" width="998" height="24"><g transform="translate(-848,-36)" fill="#000">
<rect x="887" y="43" width="2.5" height="10"/><path d="M890 48l5-5v10z M895 48l5-5v10z"/>
<path d="M990 48l5-5v10z M995 48l5-5v10z"/>
<path d="M1091 48l6-5.5v11z"/>
<path d="M1598 48l-6-5.5v11z"/>
<path d="M1700 48l-5-5v10z M1695 48l-5-5v10z"/>
<path d="M1800 48l-5-5v10z M1795 48l-5-5v10z"/><rect x="1800" y="43" width="2.5" height="10"/>
</g></svg>
<svg style="left:848px;top:60px;overflow:hidden" width="998" height="814"><g transform="translate(-848,-60)"><rect x="848" y="60" width="998" height="814" fill="#000"/><rect x="858" y="125" width="988" height="137" fill="#9a9792"/><rect x="858" y="378" width="988" height="22" fill="#16345a"/><path d="M858 76.5H1846" stroke="#7a7a7a" stroke-width="1"/><path d="M866.5 77V85M879.5 77V85M892.5 77V85M906.5 77V85M919.5 77V85M945.5 77V85M959.5 77V85M972.5 77V85M985.5 77V85M999.5 77V85M1012.5 77V85M1025.5 77V85M1038.5 77V85M1052.5 77V85M1078.5 77V85M1092.5 77V85M1105.5 77V85M1118.5 77V85M1131.5 77V85M1145.5 77V85M1158.5 77V85M1171.5 77V85M1185.5 77V85M1211.5 77V85M1224.5 77V85M1238.5 77V85M1251.5 77V85M1264.5 77V85M1278.5 77V85M1291.5 77V85M1304.5 77V85M1317.5 77V85M1344.5 77V85M1357.5 77V85M1371.5 77V85M1384.5 77V85M1397.5 77V85M1410.5 77V85M1424.5 77V85M1437.5 77V85M1450.5 77V85M1477.5 77V85M1490.5 77V85M1503.5 77V85M1517.5 77V85M1530.5 77V85M1543.5 77V85M1556.5 77V85M1570.5 77V85M1583.5 77V85M1610.5 77V85M1623.5 77V85M1636.5 77V85M1649.5 77V85M1663.5 77V85M1676.5 77V85M1689.5 77V85M1703.5 77V85M1716.5 77V85M1742.5 77V85M1756.5 77V85M1769.5 77V85M1782.5 77V85M1796.5 77V85M1809.5 77V85M1822.5 77V85M1835.5 77V85" stroke="#7a7a7a" stroke-width="1"/><path d="M858.5 77V874M932.5 77V874M1065.5 77V874M1198.5 77V874M1330.5 77V874M1463.5 77V874M1596.5 77V874M1729.5 77V874" stroke="#7a7a7a" stroke-width="1"/><g font-family="Liberation Sans"><text x="858.4" y="75" font-size="10" fill="#f0f0f0" textLength="67.4" lengthAdjust="spacingAndGlyphs" text-anchor="start">574394757 ps</text><text x="932.8" y="75" font-size="10" fill="#f0f0f0" textLength="67.4" lengthAdjust="spacingAndGlyphs" text-anchor="start">580000000 ps</text><text x="1065.6" y="75" font-size="10" fill="#f0f0f0" textLength="67.4" lengthAdjust="spacingAndGlyphs" text-anchor="start">590000000 ps</text><text x="1198.4" y="75" font-size="10" fill="#f0f0f0" textLength="67.4" lengthAdjust="spacingAndGlyphs" text-anchor="start">600000000 ps</text><text x="1331" y="75" font-size="10" fill="#f0f0f0" textLength="67.4" lengthAdjust="spacingAndGlyphs" text-anchor="start">610000000 ps</text><text x="1463.6" y="75" font-size="10" fill="#f0f0f0" textLength="67.4" lengthAdjust="spacingAndGlyphs" text-anchor="start">620000000 ps</text><text x="1596.6" y="75" font-size="10" fill="#f0f0f0" textLength="67.4" lengthAdjust="spacingAndGlyphs" text-anchor="start">630000000 ps</text><text x="1777.6" y="75" font-size="10" fill="#f0f0f0" textLength="67.4" lengthAdjust="spacingAndGlyphs" text-anchor="start">648847760 ps</text></g><path d="M858.5 125V262M932.5 125V262M1065.5 125V262M1198.5 125V262M1330.5 125V262M1463.5 125V262M1596.5 125V262M1729.5 125V262" stroke="#6f6e6d" stroke-width="1"/><path d="M858 262.5H1846M858 308.5H1846M858 354.5H1846M858 377.5H1846M858 400.5H1846M858 423.5H1846M858 446.5H1846M858 469.5H1846M858 492.5H1846M858 515.5H1846M858 538.5H1846M858 561.5H1846M858 584.5H1846M858 607.5H1846M858 630.5H1846M858 653.5H1846M858 676.5H1846M858 699.5H1846M858 722.5H1846M858 745.5H1846M858 768.5H1846M858 791.5H1846M858 814.5H1846M858 837.5H1846M858 860.5H1846" stroke="#7a7a7a" stroke-width="1"/><path d="M858 147.5H1846M858 170.5H1846M858 193.5H1846M858 216.5H1846M858 239.5H1846" stroke="#6f6e6d" stroke-width="1"/><g font-family="Liberation Sans"><polygon points="858.5,137.5 860.5,129.5 1124,129.5 1126,137.5 1124,145.5 860.5,145.5" fill="none" stroke="#00ff00" stroke-width="1"/><text x="862.5" y="141" font-size="10" fill="#f0f0f0" textLength="5.4" lengthAdjust="spacingAndGlyphs" text-anchor="start">4</text><polygon points="1126,137.5 1128,129.5 1190.5,129.5 1192.5,137.5 1190.5,145.5 1128,145.5" fill="none" stroke="#00ff00" stroke-width="1"/><text x="1130" y="141" font-size="10" fill="#f0f0f0" textLength="5.4" lengthAdjust="spacingAndGlyphs" text-anchor="start">5</text><polygon points="1192.5,137.5 1194.5,129.5 1864,129.5 1866,137.5 1864,145.5 1194.5,145.5" fill="none" stroke="#00ff00" stroke-width="1"/><text x="1196.5" y="141" font-size="10" fill="#f0f0f0" textLength="5.4" lengthAdjust="spacingAndGlyphs" text-anchor="start">0</text><path d="M858.5 168.5H1846" fill="none" stroke="#00ff00" stroke-width="1"/><path d="M858.5 191.5H1846" fill="none" stroke="#00ff00" stroke-width="1"/><path d="M858.5 198.5H1192.5V214.5H1846" fill="none" stroke="#00ff00" stroke-width="1"/><path d="M858.5 237.5H1846" fill="none" stroke="#00ff00" stroke-width="1"/><path d="M858.5 260.5H1126.5V244.5H1192.5V260.5H1846" fill="none" stroke="#00ff00" stroke-width="1"/><polygon points="858.5,298.5 860.5,290.5 1391,290.5 1393,298.5 1391,306.5 860.5,306.5" fill="none" stroke="#00ff00" stroke-width="1"/><text x="862.5" y="302" font-size="10" fill="#f0f0f0" textLength="80.4" lengthAdjust="spacingAndGlyphs" text-anchor="start">5FEFFFFFFFF72A9</text><polygon points="1406,298.5 1408,290.5 1409.3,290.5 1411.3,298.5 1409.3,306.5 1408,306.5" fill="none" stroke="#00ff00" stroke-width="1"/><polygon points="1411.3,298.5 1413.3,290.5 1414.8,290.5 1416.8,298.5 1414.8,306.5 1413.3,306.5" fill="none" stroke="#00ff00" stroke-width="1"/><polygon points="1420.5,298.5 1422.5,290.5 1424.3,290.5 1426.3,298.5 1424.3,306.5 1422.5,306.5" fill="none" stroke="#00ff00" stroke-width="1"/><polygon points="1426.3,298.5 1428.3,290.5 1658,290.5 1660,298.5 1658,306.5 1428.3,306.5" fill="none" stroke="#00ff00" stroke-width="1"/><text x="1430.3" y="302" font-size="10" fill="#f0f0f0" textLength="96.4" lengthAdjust="spacingAndGlyphs" text-anchor="start">44D20000000034A8</text><polygon points="1664.5,298.5 1666.5,290.5 1864,290.5 1866,298.5 1864,306.5 1666.5,306.5" fill="none" stroke="#00ff00" stroke-width="1"/><text x="1668.5" y="302" font-size="10" fill="#f0f0f0" textLength="81.4" lengthAdjust="spacingAndGlyphs" text-anchor="start">260FFFFFFFF42A9</text><polygon points="1392,298.5 1392.7,290 1405.8999999999999,290 1406.6,298.5 1405.8999999999999,307 1392.7,307" fill="#00ff00"/><polygon points="1416.5,298.5 1417.2,290 1420.1,290 1420.8,298.5 1420.1,307 1417.2,307" fill="#00ff00"/><polygon points="1658.6,298.5 1659.3,290 1664.3,290 1665,298.5 1664.3,307 1659.3,307" fill="#00ff00"/><polygon points="858.5,344.5 860.5,336.5 1391,336.5 1393,344.5 1391,352.5 860.5,352.5" fill="none" stroke="#00ff00" stroke-width="1"/><text x="862.5" y="348" font-size="10" fill="#f0f0f0" textLength="80.4" lengthAdjust="spacingAndGlyphs" text-anchor="start">5FEFFFFFFFF72A9</text><polygon points="1406,344.5 1408,336.5 1409.3,336.5 1411.3,344.5 1409.3,352.5 1408,352.5" fill="none" stroke="#00ff00" stroke-width="1"/><polygon points="1411.3,344.5 1413.3,336.5 1414.8,336.5 1416.8,344.5 1414.8,352.5 1413.3,352.5" fill="none" stroke="#00ff00" stroke-width="1"/><polygon points="1420.5,344.5 1422.5,336.5 1424.3,336.5 1426.3,344.5 1424.3,352.5 1422.5,352.5" fill="none" stroke="#00ff00" stroke-width="1"/><polygon points="1426.3,344.5 1428.3,336.5 1658,336.5 1660,344.5 1658,352.5 1428.3,352.5" fill="none" stroke="#00ff00" stroke-width="1"/><text x="1430.3" y="348" font-size="10" fill="#f0f0f0" textLength="96.4" lengthAdjust="spacingAndGlyphs" text-anchor="start">44D20000000034A8</text><polygon points="1664.5,344.5 1666.5,336.5 1864,336.5 1866,344.5 1864,352.5 1666.5,352.5" fill="none" stroke="#00ff00" stroke-width="1"/><text x="1668.5" y="348" font-size="10" fill="#f0f0f0" textLength="81.4" lengthAdjust="spacingAndGlyphs" text-anchor="start">260FFFFFFFF42A9</text><polygon points="1392,344.5 1392.7,336 1405.8999999999999,336 1406.6,344.5 1405.8999999999999,353 1392.7,353" fill="#00ff00"/><polygon points="1416.5,344.5 1417.2,336 1420.1,336 1420.8,344.5 1420.1,353 1417.2,353" fill="#00ff00"/><polygon points="1658.6,344.5 1659.3,336 1664.3,336 1665,344.5 1664.3,353 1659.3,353" fill="#00ff00"/><path d="M858.5 375.5H1406V359.5H1411.5V375.5H1846" fill="none" stroke="#00ff00" stroke-width="1"/><rect x="1393" y="359" width="13" height="17" fill="#00ff00"/><rect x="1417" y="359" width="4" height="17" fill="#00ff00"/><rect x="1660" y="359" width="4" height="17" fill="#00ff00"/><polygon points="858.5,390.5 860.5,382.5 1391,382.5 1393,390.5 1391,398.5 860.5,398.5" fill="none" stroke="#00ff00" stroke-width="1"/><text x="862.5" y="394" font-size="10" fill="#f0f0f0" textLength="5.4" lengthAdjust="spacingAndGlyphs" text-anchor="start">0</text><polygon points="1406,390.5 1408,382.5 1409.3,382.5 1411.3,390.5 1409.3,398.5 1408,398.5" fill="none" stroke="#00ff00" stroke-width="1"/><polygon points="1411.3,390.5 1413.3,382.5 1414.8,382.5 1416.8,390.5 1414.8,398.5 1413.3,398.5" fill="none" stroke="#00ff00" stroke-width="1"/><polygon points="1420.5,390.5 1422.5,382.5 1424.3,382.5 1426.3,390.5 1424.3,398.5 1422.5,398.5" fill="none" stroke="#00ff00" stroke-width="1"/><polygon points="1426.3,390.5 1428.3,382.5 1658,382.5 1660,390.5 1658,398.5 1428.3,398.5" fill="none" stroke="#00ff00" stroke-width="1"/><text x="1430.3" y="394" font-size="10" fill="#f0f0f0" textLength="5.4" lengthAdjust="spacingAndGlyphs" text-anchor="start">1</text><polygon points="1664.5,390.5 1666.5,382.5 1864,382.5 1866,390.5 1864,398.5 1666.5,398.5" fill="none" stroke="#00ff00" stroke-width="1"/><text x="1668.5" y="394" font-size="10" fill="#f0f0f0" textLength="5.4" lengthAdjust="spacingAndGlyphs" text-anchor="start">0</text><polygon points="1392,390.5 1392.7,382 1405.8999999999999,382 1406.6,390.5 1405.8999999999999,399 1392.7,399" fill="#00ff00"/><polygon points="1416.5,390.5 1417.2,382 1420.1,382 1420.8,390.5 1420.1,399 1417.2,399" fill="#00ff00"/><polygon points="1658.6,390.5 1659.3,382 1664.3,382 1665,390.5 1664.3,399 1659.3,399" fill="#00ff00"/><polygon points="858.5,413.5 860.5,405.5 1391,405.5 1393,413.5 1391,421.5 860.5,421.5" fill="none" stroke="#00ff00" stroke-width="1"/><text x="862.5" y="417" font-size="10" fill="#f0f0f0" textLength="5.4" lengthAdjust="spacingAndGlyphs" text-anchor="start">0</text><polygon points="1406,413.5 1408,405.5 1409.3,405.5 1411.3,413.5 1409.3,421.5 1408,421.5" fill="none" stroke="#00ff00" stroke-width="1"/><polygon points="1411.3,413.5 1413.3,405.5 1414.8,405.5 1416.8,413.5 1414.8,421.5 1413.3,421.5" fill="none" stroke="#00ff00" stroke-width="1"/><polygon points="1420.5,413.5 1422.5,405.5 1424.3,405.5 1426.3,413.5 1424.3,421.5 1422.5,421.5" fill="none" stroke="#00ff00" stroke-width="1"/><polygon points="1426.3,413.5 1428.3,405.5 1658,405.5 1660,413.5 1658,421.5 1428.3,421.5" fill="none" stroke="#00ff00" stroke-width="1"/><text x="1430.3" y="417" font-size="10" fill="#f0f0f0" textLength="5.4" lengthAdjust="spacingAndGlyphs" text-anchor="start">0</text><polygon points="1664.5,413.5 1666.5,405.5 1864,405.5 1866,413.5 1864,421.5 1666.5,421.5" fill="none" stroke="#00ff00" stroke-width="1"/><text x="1668.5" y="417" font-size="10" fill="#f0f0f0" textLength="5.4" lengthAdjust="spacingAndGlyphs" text-anchor="start">0</text><polygon points="1392,413.5 1392.7,405 1405.8999999999999,405 1406.6,413.5 1405.8999999999999,422 1392.7,422" fill="#00ff00"/><polygon points="1416.5,413.5 1417.2,405 1420.1,405 1420.8,413.5 1420.1,422 1417.2,422" fill="#00ff00"/><polygon points="1658.6,413.5 1659.3,405 1664.3,405 1665,413.5 1664.3,422 1659.3,422" fill="#00ff00"/><polygon points="858.5,436.5 860.5,428.5 1391,428.5 1393,436.5 1391,444.5 860.5,444.5" fill="none" stroke="#00ff00" stroke-width="1"/><text x="862.5" y="440" font-size="10" fill="#f0f0f0" textLength="5.4" lengthAdjust="spacingAndGlyphs" text-anchor="start">2</text><polygon points="1406,436.5 1408,428.5 1409.3,428.5 1411.3,436.5 1409.3,444.5 1408,444.5" fill="none" stroke="#00ff00" stroke-width="1"/><polygon points="1411.3,436.5 1413.3,428.5 1414.8,428.5 1416.8,436.5 1414.8,444.5 1413.3,444.5" fill="none" stroke="#00ff00" stroke-width="1"/><polygon points="1420.5,436.5 1422.5,428.5 1424.3,428.5 1426.3,436.5 1424.3,444.5 1422.5,444.5" fill="none" stroke="#00ff00" stroke-width="1"/><polygon points="1426.3,436.5 1428.3,428.5 1658,428.5 1660,436.5 1658,444.5 1428.3,444.5" fill="none" stroke="#00ff00" stroke-width="1"/><text x="1430.3" y="440" font-size="10" fill="#f0f0f0" textLength="5.4" lengthAdjust="spacingAndGlyphs" text-anchor="start">2</text><polygon points="1664.5,436.5 1666.5,428.5 1864,428.5 1866,436.5 1864,444.5 1666.5,444.5" fill="none" stroke="#00ff00" stroke-width="1"/><text x="1668.5" y="440" font-size="10" fill="#f0f0f0" textLength="5.4" lengthAdjust="spacingAndGlyphs" text-anchor="start">1</text><polygon points="1392,436.5 1392.7,428 1405.8999999999999,428 1406.6,436.5 1405.8999999999999,445 1392.7,445" fill="#00ff00"/><polygon points="1416.5,436.5 1417.2,428 1420.1,428 1420.8,436.5 1420.1,445 1417.2,445" fill="#00ff00"/><polygon points="1658.6,436.5 1659.3,428 1664.3,428 1665,436.5 1664.3,445 1659.3,445" fill="#00ff00"/><polygon points="858.5,459.5 860.5,451.5 1391,451.5 1393,459.5 1391,467.5 860.5,467.5" fill="none" stroke="#00ff00" stroke-width="1"/><text x="862.5" y="463" font-size="10" fill="#f0f0f0" textLength="9.4" lengthAdjust="spacingAndGlyphs" text-anchor="start">FF</text><polygon points="1406,459.5 1408,451.5 1409.3,451.5 1411.3,459.5 1409.3,467.5 1408,467.5" fill="none" stroke="#00ff00" stroke-width="1"/><polygon points="1411.3,459.5 1413.3,451.5 1414.8,451.5 1416.8,459.5 1414.8,467.5 1413.3,467.5" fill="none" stroke="#00ff00" stroke-width="1"/><polygon points="1420.5,459.5 1422.5,451.5 1424.3,451.5 1426.3,459.5 1424.3,467.5 1422.5,467.5" fill="none" stroke="#00ff00" stroke-width="1"/><polygon points="1426.3,459.5 1428.3,451.5 1658,451.5 1660,459.5 1658,467.5 1428.3,467.5" fill="none" stroke="#00ff00" stroke-width="1"/><text x="1430.3" y="463" font-size="10" fill="#f0f0f0" textLength="11.4" lengthAdjust="spacingAndGlyphs" text-anchor="start">69</text><polygon points="1664.5,459.5 1666.5,451.5 1864,451.5 1866,459.5 1864,467.5 1666.5,467.5" fill="none" stroke="#00ff00" stroke-width="1"/><text x="1668.5" y="463" font-size="10" fill="#f0f0f0" textLength="11.4" lengthAdjust="spacingAndGlyphs" text-anchor="start">30</text><polygon points="1392,459.5 1392.7,451 1405.8999999999999,451 1406.6,459.5 1405.8999999999999,468 1392.7,468" fill="#00ff00"/><polygon points="1416.5,459.5 1417.2,451 1420.1,451 1420.8,459.5 1420.1,468 1417.2,468" fill="#00ff00"/><polygon points="1658.6,459.5 1659.3,451 1664.3,451 1665,459.5 1664.3,468 1659.3,468" fill="#00ff00"/><path d="M858.5 490.5H1846" fill="none" stroke="#00ff00" stroke-width="1"/><polygon points="858.5,505.5 860.5,497.5 1391,497.5 1393,505.5 1391,513.5 860.5,513.5" fill="none" stroke="#00ff00" stroke-width="1"/><text x="862.5" y="509" font-size="10" fill="#f0f0f0" textLength="39.4" lengthAdjust="spacingAndGlyphs" text-anchor="start">FFFFFFFF</text><polygon points="1406,505.5 1408,497.5 1409.3,497.5 1411.3,505.5 1409.3,513.5 1408,513.5" fill="none" stroke="#00ff00" stroke-width="1"/><polygon points="1411.3,505.5 1413.3,497.5 1414.8,497.5 1416.8,505.5 1414.8,513.5 1413.3,513.5" fill="none" stroke="#00ff00" stroke-width="1"/><polygon points="1420.5,505.5 1422.5,497.5 1424.3,497.5 1426.3,505.5 1424.3,513.5 1422.5,513.5" fill="none" stroke="#00ff00" stroke-width="1"/><polygon points="1426.3,505.5 1428.3,497.5 1658,497.5 1660,505.5 1658,513.5 1428.3,513.5" fill="none" stroke="#00ff00" stroke-width="1"/><text x="1430.3" y="509" font-size="10" fill="#f0f0f0" textLength="5.4" lengthAdjust="spacingAndGlyphs" text-anchor="start">0</text><polygon points="1664.5,505.5 1666.5,497.5 1864,497.5 1866,505.5 1864,513.5 1666.5,513.5" fill="none" stroke="#00ff00" stroke-width="1"/><text x="1668.5" y="509" font-size="10" fill="#f0f0f0" textLength="39.4" lengthAdjust="spacingAndGlyphs" text-anchor="start">FFFFFFFF</text><polygon points="1392,505.5 1392.7,497 1405.8999999999999,497 1406.6,505.5 1405.8999999999999,514 1392.7,514" fill="#00ff00"/><polygon points="1416.5,505.5 1417.2,497 1420.1,497 1420.8,505.5 1420.1,514 1417.2,514" fill="#00ff00"/><polygon points="1658.6,505.5 1659.3,497 1664.3,497 1665,505.5 1664.3,514 1659.3,514" fill="#00ff00"/><polygon points="858.5,528.5 860.5,520.5 1391,520.5 1393,528.5 1391,536.5 860.5,536.5" fill="none" stroke="#00ff00" stroke-width="1"/><text x="862.5" y="532" font-size="10" fill="#f0f0f0" textLength="24.4" lengthAdjust="spacingAndGlyphs" text-anchor="start">1CAA</text><polygon points="1406,528.5 1408,520.5 1409.3,520.5 1411.3,528.5 1409.3,536.5 1408,536.5" fill="none" stroke="#00ff00" stroke-width="1"/><polygon points="1411.3,528.5 1413.3,520.5 1414.8,520.5 1416.8,528.5 1414.8,536.5 1413.3,536.5" fill="none" stroke="#00ff00" stroke-width="1"/><polygon points="1420.5,528.5 1422.5,520.5 1424.3,520.5 1426.3,528.5 1424.3,536.5 1422.5,536.5" fill="none" stroke="#00ff00" stroke-width="1"/><polygon points="1426.3,528.5 1428.3,520.5 1658,520.5 1660,528.5 1658,536.5 1428.3,536.5" fill="none" stroke="#00ff00" stroke-width="1"/><text x="1430.3" y="532" font-size="10" fill="#f0f0f0" textLength="18.4" lengthAdjust="spacingAndGlyphs" text-anchor="start">D2A</text><polygon points="1664.5,528.5 1666.5,520.5 1864,520.5 1866,528.5 1864,536.5 1666.5,536.5" fill="none" stroke="#00ff00" stroke-width="1"/><text x="1668.5" y="532" font-size="10" fill="#f0f0f0" textLength="23.4" lengthAdjust="spacingAndGlyphs" text-anchor="start">10AA</text><polygon points="1392,528.5 1392.7,520 1405.8999999999999,520 1406.6,528.5 1405.8999999999999,537 1392.7,537" fill="#00ff00"/><polygon points="1416.5,528.5 1417.2,520 1420.1,520 1420.8,528.5 1420.1,537 1417.2,537" fill="#00ff00"/><polygon points="1658.6,528.5 1659.3,520 1664.3,520 1665,528.5 1664.3,537 1659.3,537" fill="#00ff00"/><path d="M858.5 559.5H1846" fill="none" stroke="#00ff00" stroke-width="1"/><path d="M858.5 566.5H1406V582.5H1411.5V566.5H1421V566.5H1427V582.5H1664V566.5H1846" fill="none" stroke="#00ff00" stroke-width="1"/><rect x="1393" y="566" width="13" height="17" fill="#00ff00"/><rect x="1417" y="566" width="4" height="17" fill="#00ff00"/><rect x="1660" y="566" width="4" height="17" fill="#00ff00"/><polygon points="858.5,597.5 860.5,589.5 1058.5,589.5 1060.5,597.5 1058.5,605.5 860.5,605.5" fill="none" stroke="#ff0000" stroke-width="1"/><text x="862.5" y="601" font-size="10" fill="#f0f0f0" textLength="17.4" lengthAdjust="spacingAndGlyphs" text-anchor="start">XXX</text><polygon points="1060.5,597.5 1062.5,589.5 1190.5,589.5 1192.5,597.5 1190.5,605.5 1062.5,605.5" fill="none" stroke="#00ff00" stroke-width="1"/><text x="1064.5" y="601" font-size="10" fill="#f0f0f0" textLength="17.4" lengthAdjust="spacingAndGlyphs" text-anchor="start">653</text><polygon points="1192.5,597.5 1194.5,589.5 1323.5,589.5 1325.5,597.5 1323.5,605.5 1194.5,605.5" fill="none" stroke="#ff0000" stroke-width="1"/><text x="1196.5" y="601" font-size="10" fill="#f0f0f0" textLength="17.4" lengthAdjust="spacingAndGlyphs" text-anchor="start">XXX</text><polygon points="1325.5,597.5 1327.5,589.5 1864,589.5 1866,597.5 1864,605.5 1327.5,605.5" fill="none" stroke="#ff0000" stroke-width="1"/><text x="1329.5" y="601" font-size="10" fill="#f0f0f0" textLength="17.4" lengthAdjust="spacingAndGlyphs" text-anchor="start">XXX</text><polygon points="858.5,620.5 860.5,612.5 1124.5,612.5 1126.5,620.5 1124.5,628.5 860.5,628.5" fill="none" stroke="#00ff00" stroke-width="1"/><text x="862.5" y="624" font-size="10" fill="#f0f0f0" textLength="5.4" lengthAdjust="spacingAndGlyphs" text-anchor="start">4</text><polygon points="1126.5,620.5 1128.5,612.5 1190.5,612.5 1192.5,620.5 1190.5,628.5 1128.5,628.5" fill="none" stroke="#00ff00" stroke-width="1"/><text x="1130.5" y="624" font-size="10" fill="#f0f0f0" textLength="5.4" lengthAdjust="spacingAndGlyphs" text-anchor="start">0</text><polygon points="1192.5,620.5 1194.5,612.5 1864,612.5 1866,620.5 1864,628.5 1194.5,628.5" fill="none" stroke="#00ff00" stroke-width="1"/><text x="1196.5" y="624" font-size="10" fill="#f0f0f0" textLength="5.4" lengthAdjust="spacingAndGlyphs" text-anchor="start">1</text><polygon points="858.5,643.5 860.5,635.5 1864,635.5 1866,643.5 1864,651.5 860.5,651.5" fill="none" stroke="#00ff00" stroke-width="1"/><text x="862.5" y="647" font-size="10" fill="#f0f0f0" textLength="5.4" lengthAdjust="spacingAndGlyphs" text-anchor="start">9</text><polygon points="858.5,666.5 860.5,658.5 1864,658.5 1866,666.5 1864,674.5 860.5,674.5" fill="none" stroke="#00ff00" stroke-width="1"/><text x="862.5" y="670" font-size="10" fill="#f0f0f0" textLength="5.4" lengthAdjust="spacingAndGlyphs" text-anchor="start">1</text><path d="M858.5 697.5H1846" fill="none" stroke="#00ff00" stroke-width="1"/><path d="M858.5 704.5H1846" fill="none" stroke="#00ff00" stroke-width="1"/><path d="M858.5 743.5H1846" fill="none" stroke="#00ff00" stroke-width="1"/><path d="M858.5 766.5H860.5V750.5H893.5V766.5H926.5V750.5H959.5V766.5H993.5V750.5H1026.5V766.5H1059.5V750.5H1092.5V766.5H1125.5V750.5H1159.5V766.5H1192.5V750.5H1225.5V766.5H1258.5V750.5H1292.5V766.5H1325.5V750.5H1358.5V766.5H1391.5V750.5H1424.5V766.5H1458.5V750.5H1491.5V766.5H1524.5V750.5H1557.5V766.5H1591.5V750.5H1624.5V766.5H1657.5V750.5H1690.5V766.5H1723.5V750.5H1757.5V766.5H1790.5V750.5H1823.5V766.5H1846" fill="none" stroke="#00ff00" stroke-width="1"/><rect x="858" y="773" width="988" height="17" fill="#00ff00"/><polygon points="858.5,804.5 860.5,796.5 1124.5,796.5 1126.5,804.5 1124.5,812.5 860.5,812.5" fill="none" stroke="#00ff00" stroke-width="1"/><text x="862.5" y="808" font-size="10" fill="#f0f0f0" textLength="131.4" lengthAdjust="spacingAndGlyphs" text-anchor="start">200000001AE06B80000144</text><polygon points="1126.5,804.5 1128.5,796.5 1189.5,796.5 1191.5,804.5 1189.5,812.5 1128.5,812.5" fill="none" stroke="#00ff00" stroke-width="1"/><polygon points="1191.5,804.5 1193.5,796.5 1195.5,796.5 1197.5,804.5 1195.5,812.5 1193.5,812.5" fill="#00ff00" stroke="#00ff00" stroke-width="1"/><polygon points="1197.5,804.5 1199.5,796.5 1403.5,796.5 1405.5,804.5 1403.5,812.5 1199.5,812.5" fill="none" stroke="#00ff00" stroke-width="1"/><text x="1201.5" y="808" font-size="10" fill="#f0f0f0" textLength="132.4" lengthAdjust="spacingAndGlyphs" text-anchor="start">63290CA41AE06B80000140</text><polygon points="1405.5,804.5 1407.5,796.5 1864,796.5 1866,804.5 1864,812.5 1407.5,812.5" fill="none" stroke="#00ff00" stroke-width="1"/><text x="1409.5" y="808" font-size="10" fill="#f0f0f0" textLength="132.4" lengthAdjust="spacingAndGlyphs" text-anchor="start">23290CA41AE06B80000140</text><polygon points="858.5,827.5 860.5,819.5 1124.5,819.5 1126.5,827.5 1124.5,835.5 860.5,835.5" fill="none" stroke="#00ff00" stroke-width="1"/><text x="862.5" y="831" font-size="10" fill="#f0f0f0" textLength="5.4" lengthAdjust="spacingAndGlyphs" text-anchor="start">1</text><polygon points="1126.5,827.5 1128.5,819.5 1189.5,819.5 1191.5,827.5 1189.5,835.5 1128.5,835.5" fill="none" stroke="#00ff00" stroke-width="1"/><text x="1130.5" y="831" font-size="10" fill="#f0f0f0" textLength="5.4" lengthAdjust="spacingAndGlyphs" text-anchor="start">1</text><polygon points="1191.5,827.5 1193.5,819.5 1195.5,819.5 1197.5,827.5 1195.5,835.5 1193.5,835.5" fill="#00ff00" stroke="#00ff00" stroke-width="1"/><polygon points="1197.5,827.5 1199.5,819.5 1403.5,819.5 1405.5,827.5 1403.5,835.5 1199.5,835.5" fill="none" stroke="#00ff00" stroke-width="1"/><text x="1201.5" y="831" font-size="10" fill="#f0f0f0" textLength="5.4" lengthAdjust="spacingAndGlyphs" text-anchor="start">3</text><polygon points="1405.5,827.5 1407.5,819.5 1864,819.5 1866,827.5 1864,835.5 1407.5,835.5" fill="none" stroke="#00ff00" stroke-width="1"/><text x="1409.5" y="831" font-size="10" fill="#f0f0f0" textLength="5.4" lengthAdjust="spacingAndGlyphs" text-anchor="start">1</text><polygon points="858.5,850.5 860.5,842.5 1124.5,842.5 1126.5,850.5 1124.5,858.5 860.5,858.5" fill="none" stroke="#00ff00" stroke-width="1"/><text x="862.5" y="854" font-size="10" fill="#f0f0f0" textLength="37.4" lengthAdjust="spacingAndGlyphs" text-anchor="start">D7035C</text><polygon points="1126.5,850.5 1128.5,842.5 1189.5,842.5 1191.5,850.5 1189.5,858.5 1128.5,858.5" fill="none" stroke="#00ff00" stroke-width="1"/><polygon points="1191.5,850.5 1193.5,842.5 1195.5,842.5 1197.5,850.5 1195.5,858.5 1193.5,858.5" fill="#00ff00" stroke="#00ff00" stroke-width="1"/><polygon points="1197.5,850.5 1199.5,842.5 1403.5,842.5 1405.5,850.5 1403.5,858.5 1199.5,858.5" fill="none" stroke="#00ff00" stroke-width="1"/><text x="1201.5" y="854" font-size="10" fill="#f0f0f0" textLength="85.4" lengthAdjust="spacingAndGlyphs" text-anchor="start">19486520D7035C</text><polygon points="1405.5,850.5 1407.5,842.5 1864,842.5 1866,850.5 1864,858.5 1407.5,858.5" fill="none" stroke="#00ff00" stroke-width="1"/><text x="1409.5" y="854" font-size="10" fill="#f0f0f0" textLength="85.4" lengthAdjust="spacingAndGlyphs" text-anchor="start">19486520D7035C</text></g><path d="M1545.5 75V874" stroke="#fff" stroke-width="1"/><rect x="1545.5" y="61.5" width="112" height="14" fill="#000" stroke="#fff" stroke-width="1"/><g font-family="Liberation Sans"><text x="1549" y="72" font-size="10" fill="#f4f4f4" textLength="94.4" lengthAdjust="spacingAndGlyphs" text-anchor="start">C1 T=626112870ps</text></g></g></svg>
</body></html>
